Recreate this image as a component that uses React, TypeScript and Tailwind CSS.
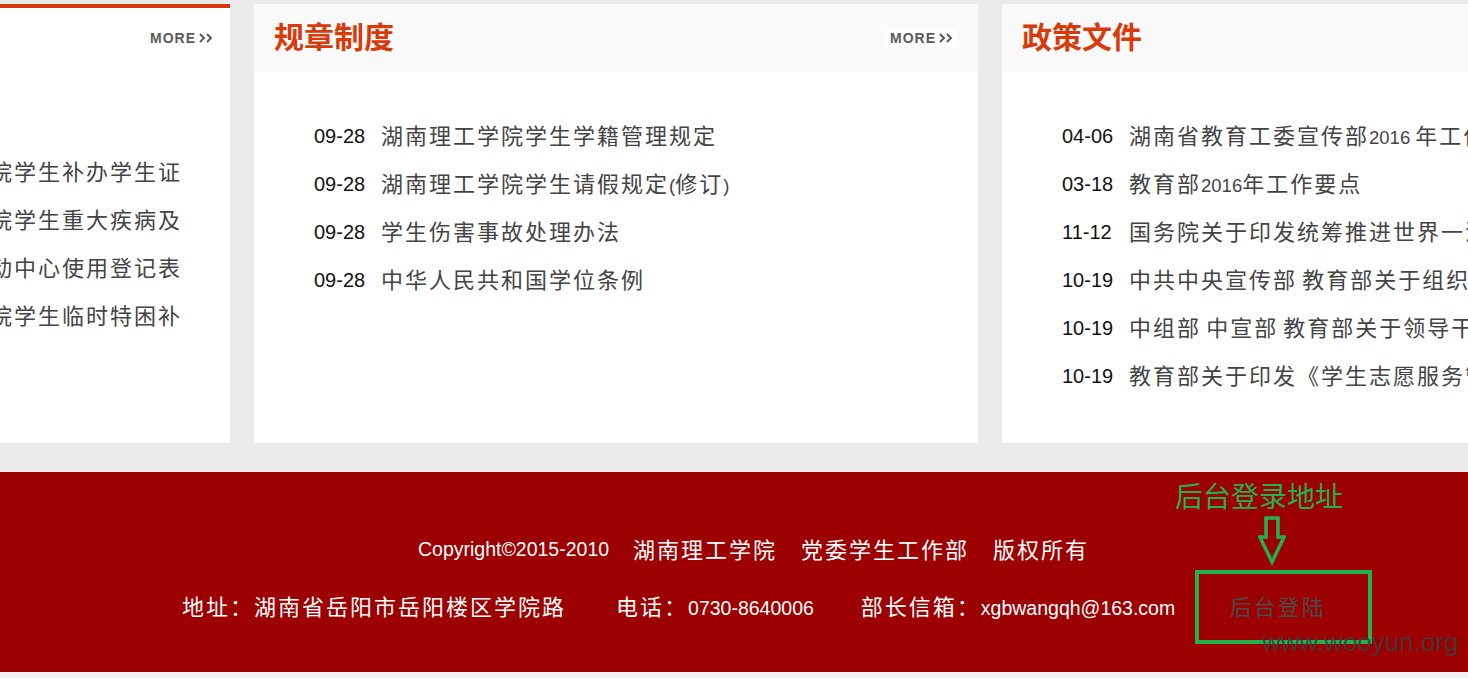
import React from 'react';

const rules = [
  '湖南理工学院学生学籍管理规定',
  '湖南理工学院学生请假规定(修订)',
  '学生伤害事故处理办法',
  '中华人民共和国学位条例',
];

const policies = [
  { date: '04-06', title: '湖南省教育工委宣传部2016 年工作要点' },
  { date: '03-18', title: '教育部2016年工作要点' },
  { date: '11-12', title: '国务院关于印发统筹推进世界一流大学和一流学科建设总体方案的通知' },
  { date: '10-19', title: '中共中央宣传部 教育部关于组织开展全国大学生网络文化节的通知' },
  { date: '10-19', title: '中组部 中宣部 教育部关于领导干部上讲台的通知' },
  { date: '10-19', title: '教育部关于印发《学生志愿服务管理暂行办法》的通知' },
];

const notices = [
  '湖南理工学院学生补办学生证',
  '湖南理工学院学生重大疾病及',
  '大学生活动中心使用登记表',
  '湖南理工学院学生临时特困补',
];

const font = { fontFamily: '"Liberation Sans", "Noto Sans CJK SC", sans-serif' };

// latin runs get their own (smaller) size, CJK runs get spaced out
function Mixed({ text, latin }: { text: string; latin: string }) {
  const parts = text.split(/([\x20-\x7e]+)/).filter(Boolean);
  return (
    <>
      {parts.map((p, i) =>
        /^[\x20-\x7e]+$/.test(p) ? (
          <span key={i} className={latin}>{p}</span>
        ) : (
          <span key={i} className="tracking-[2px]">{p}</span>
        )
      )}
    </>
  );
}

function More({ boxed }: { boxed?: boolean }) {
  return (
    <div className={`flex items-center gap-[3px] px-[4px] h-[18px] ${boxed ? 'bg-white' : ''}`}>
      <span className="text-[14px] font-bold leading-none tracking-[1px] text-[#5a5a5a]">MORE</span>
      <svg width="14" height="10" viewBox="0 0 14 10" fill="none" stroke="#5a5a5a" strokeWidth="2">
        <polyline points="1,1 5,5 1,9" />
        <polyline points="8,1 12,5 8,9" />
      </svg>
    </div>
  );
}

function Row({ date, title }: { date: string; title: string }) {
  return (
    <li className="flex items-center h-[48px] whitespace-nowrap">
      <span className="w-[67px] shrink-0 text-[20px] text-[#111]">{date}</span>
      <span className="text-[22px] text-[#444]">
        <Mixed text={title} latin="text-[18.5px] tracking-normal" />
      </span>
    </li>
  );
}

function Header({ title, more }: { title: string; more?: boolean }) {
  return (
    <div className="h-[68px] bg-[#fafafa] flex items-center justify-between pl-[20px] pr-[21px]">
      <h2 className="text-[30px] font-bold leading-none text-[#d83b0b]">{title}</h2>
      {more && <More boxed />}
    </div>
  );
}

export default function App() {
  return (
    <div className="w-[1468px] h-[678px] overflow-hidden bg-[#ebebeb]" style={font}>
      {/* Panels */}
      <div className="flex gap-[24px] pt-[4px] -ml-[494px] h-[443px]">
        <div className="w-[724px] shrink-0 bg-white border-t-[4px] border-[#d8380e] flex flex-col">
          <div className="h-[56px] flex items-center justify-end pr-[13px] pt-[4px]">
            <More />
          </div>
          <ul className="pt-[84px] pr-[48px] flex flex-col items-end">
            {notices.map((t, i) => (
              <li key={i} className="h-[48px] flex items-center whitespace-nowrap text-[22px] text-[#444]">
                <span className="tracking-[2px]">{t}</span>
              </li>
            ))}
          </ul>
        </div>

        <div className="w-[724px] shrink-0 bg-white flex flex-col">
          <Header title="规章制度" more />
          <ul className="pt-[40px] pl-[60px]">
            {rules.map((t, i) => (
              <Row key={i} date="09-28" title={t} />
            ))}
          </ul>
        </div>

        <div className="w-[724px] shrink-0 bg-white flex flex-col overflow-hidden">
          <Header title="政策文件" />
          <ul className="pt-[40px] pl-[60px]">
            {policies.map((p, i) => (
              <Row key={i} date={p.date} title={p.title} />
            ))}
          </ul>
        </div>
      </div>

      {/* Footer */}
      <footer className="relative mt-[29px] h-[200px] bg-[#9c0000] text-white">
        <div className="flex items-center gap-[24px] pl-[418px] pt-[62px] h-[94px] whitespace-nowrap">
          <span className="text-[19.5px]">Copyright©2015-2010</span>
          <span className="text-[22px]"><Mixed text="湖南理工学院" latin="" /></span>
          <span className="text-[22px]"><Mixed text="党委学生工作部" latin="" /></span>
          <span className="text-[22px]"><Mixed text="版权所有" latin="" /></span>
        </div>

        <div className="flex items-center pl-[182px] mt-[4px] whitespace-nowrap">
          <span className="text-[22px]">
            <Mixed text="地址：湖南省岳阳市岳阳楼区学院路" latin="" />
          </span>
          <span className="text-[22px] ml-[50px]">
            <Mixed text="电话：0730-8640006" latin="text-[19.5px] tracking-normal" />
          </span>
          <span className="text-[22px] ml-[47px]">
            <Mixed text="部长信箱：xgbwangqh@163.com" latin="text-[19.5px] tracking-normal" />
          </span>
          <div className="ml-[20px] w-[177px] h-[74px] border-[4px] border-[#22b14c] flex items-center justify-center pr-[12px]">
            <span className="text-[22px] text-[#4a4a4a]">
              <Mixed text="后台登陆" latin="" />
            </span>
          </div>
        </div>

        {/* annotation overlay */}
        <div className="absolute left-[1175px] top-[6px] text-[28px] leading-[40px] text-[#22b14c]">
          后台登录地址
        </div>
        <svg
          className="absolute left-[1258px] top-[44px]"
          width="28"
          height="50"
          viewBox="0 0 28 50"
          fill="none"
          stroke="#22b14c"
          strokeWidth="3.5"
          strokeLinejoin="miter"
        >
          <path d="M8 2 H20 V21 H26 L14 46 L2 21 H8 Z" />
        </svg>
        <div className="absolute left-[1262px] top-[152px] text-[26px] leading-[36px] text-[#3d3d3d]/90">
          www.wooyun.org
        </div>
      </footer>

      <div className="h-[6px] bg-[#f2f2f2]" />
    </div>
  );
}
